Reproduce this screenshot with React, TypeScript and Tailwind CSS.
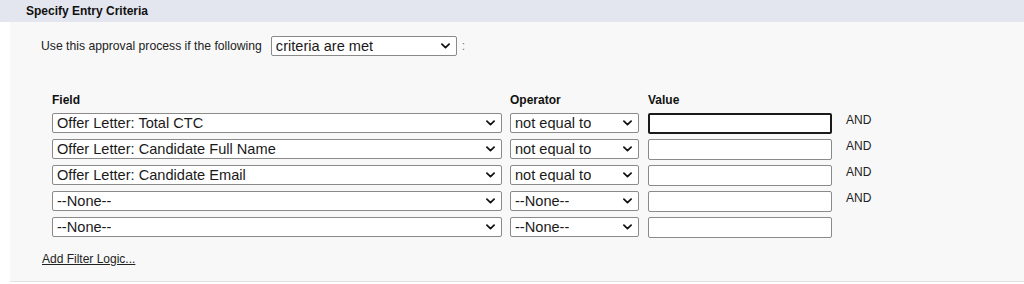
import type { ReactNode } from "react";

interface CriteriaRow {
  field: string;
  operator: string;
  showAnd: boolean;
  focused?: boolean;
}

const rows: CriteriaRow[] = [
  { field: "Offer Letter: Total CTC", operator: "not equal to", showAnd: true, focused: true },
  { field: "Offer Letter: Candidate Full Name", operator: "not equal to", showAnd: true },
  { field: "Offer Letter: Candidate Email", operator: "not equal to", showAnd: true },
  { field: "--None--", operator: "--None--", showAnd: true },
  { field: "--None--", operator: "--None--", showAnd: false },
];

function Chevron() {
  return (
    <svg
      aria-hidden="true"
      viewBox="0 0 10 6"
      className="h-[6px] w-[9px] shrink-0 text-[#111]"
    >
      <path
        d="M1 1 L5 4.8 L9 1"
        fill="none"
        stroke="currentColor"
        strokeWidth="1.9"
        strokeLinecap="round"
        strokeLinejoin="round"
      />
    </svg>
  );
}

function FakeSelect({
  value,
  className,
}: {
  value: ReactNode;
  className: string;
}) {
  return (
    <div
      className={[
        "flex h-[20px] items-center justify-between rounded-[2px] border border-[#8a8a8a] bg-white",
        "pl-[4px] pr-[6px] text-[14.6px] leading-none text-[#1a1a1a]",
        className,
      ].join(" ")}
    >
      <span className="truncate">{value}</span>
      <Chevron />
    </div>
  );
}

export default function App() {
  return (
    <div
      className="h-[284px] w-[1024px] overflow-hidden bg-white text-[#222]"
      style={{ fontFamily: '"Liberation Sans", Arial, sans-serif' }}
    >
      <div className="flex h-[22px] items-center bg-[#e3e6ee] px-[26px] text-[12px] font-bold text-[#111]">
        Specify Entry Criteria
      </div>

      <div className="ml-[10px] border-b border-[#e2e2e2] bg-[#f8f8f8] pb-[15px] pl-[31px] pt-[14px]">
        <div className="flex items-center text-[12px]">
          <span className="text-[12.2px]">Use this approval process if the following</span>
          <FakeSelect
            value="criteria are met"
            className="ml-[9px] w-[186px]"
          />
          <span className="ml-[5px] text-[#777]">:</span>
        </div>

        <div className="ml-[11px] mt-[37px]">
          <div className="flex h-[14px] items-end text-[12px] font-bold leading-[14px] text-[#111]">
            <span className="w-[458px]">Field</span>
            <span className="w-[138px]">Operator</span>
            <span>Value</span>
          </div>

          <div className="mt-[6px] flex flex-col gap-[6px]">
            {rows.map((row, index) => (
              <div key={index} className="flex h-[20px] items-start">
                <FakeSelect value={row.field} className="w-[450px]" />
                <FakeSelect value={row.operator} className="ml-[8px] w-[129px]" />
                <div
                  className={[
                    "ml-[9px] h-[21px] w-[184px] rounded-[2px] bg-white",
                    row.focused
                      ? "border-2 border-[#1a1a1a]"
                      : "border border-[#8a8a8a]",
                  ].join(" ")}
                />
                {row.showAnd ? (
                  <span className="ml-[14px] text-[12px] leading-[14px] text-[#222]">
                    AND
                  </span>
                ) : null}
              </div>
            ))}
          </div>
        </div>

        <div className="ml-[1px] mt-[15px] h-[14px] text-[12px] leading-[14px]">
          <a href="#" className="text-[#222] underline">
            Add Filter Logic...
          </a>
        </div>
      </div>
    </div>
  );
}
